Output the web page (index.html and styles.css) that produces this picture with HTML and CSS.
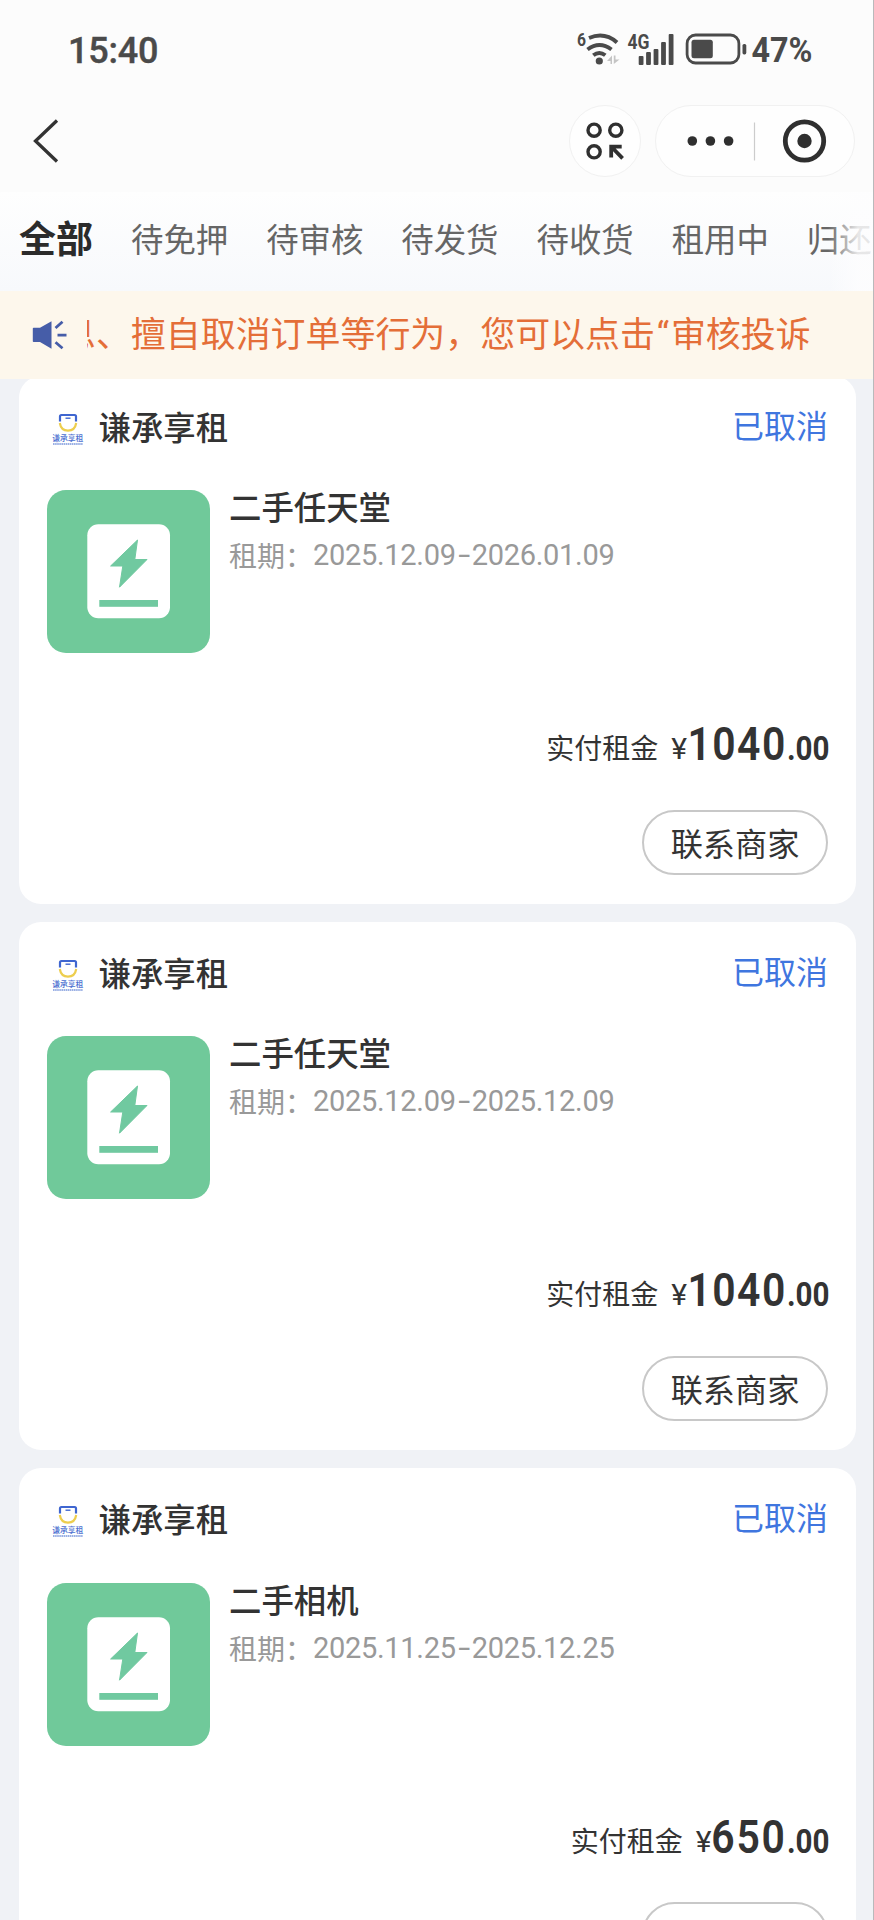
FILE: index.html
```html
<!DOCTYPE html>
<html lang="zh-CN">
<head>
<meta charset="utf-8">
<title>我的订单</title>
<link rel="stylesheet" href="styles.css">
</head>
<body>
<svg class="defs" width="0" height="0" aria-hidden="true">
  <symbol id="shop-logo" viewBox="0 0 32 34">
    <path d="M8 9.5V4.4Q8 3 9.4 3H22.6Q24 3 24 4.4V9.5" fill="none" stroke="#3f66d0" stroke-width="2.2"/>
    <path d="M13.5 6.2H18.5" fill="none" stroke="#3f66d0" stroke-width="1.4"/>
    <path d="M7.8 11Q9 18.6 16 18.6T24.2 11" fill="none" stroke="#edce4e" stroke-width="2.2"/>
    <text class="logo-text" x="0.3" y="29.4" textLength="31" lengthAdjust="spacingAndGlyphs">谦承享租</text>
    <path d="M1 32H31" stroke="#7b97dc" stroke-width="1.3" stroke-dasharray="1.6 .5"/>
  </symbol>
  <symbol id="thumb" viewBox="0 0 163 163">
    <rect width="163" height="163" fill="#70c99a"/>
    <rect x="40.3" y="34.3" width="82.7" height="94" rx="11" fill="#fff"/>
    <path d="M90.5 50L87.8 69.5H100L72.5 97.2L75.8 76H63.6Z" fill="#70c9a0" stroke="#70c9a0" stroke-width="1" stroke-linejoin="round"/>
    <rect x="52.3" y="110" width="58.7" height="6.8" fill="#70c9a0"/>
  </symbol>
</svg>

<div class="screen">
  <header class="top">
    <div class="status-bar">
      <span class="time">15:40</span>
      <svg class="status-icons" width="240" height="44" viewBox="573.5 28 240 44">
        <text class="st" x="576.5" y="46" font-size="17.5" textLength="9" lengthAdjust="spacingAndGlyphs">6</text>
        <g fill="none" stroke="#4a4a4a" stroke-width="4">
          <path d="M588.5 38Q604 31.5 616.5 42.5"/>
          <path d="M587 49.5Q599 40.5 611 49.5"/>
          <path d="M592.8 55.3Q598.8 50.6 604.8 55.3"/>
        </g>
        <circle cx="598.8" cy="61" r="3.6" fill="#4a4a4a"/>
        <path d="M606.5 61L611.5 55.5V64H610V61ZM613.3 55.5V64L619 59.5H615V55.5Z" fill="#c4c4c4"/>
        <text class="st" x="627" y="48.5" font-size="20" textLength="22" lengthAdjust="spacingAndGlyphs">4G</text>
        <g fill="#4a4a4a">
          <rect x="638.2" y="56" width="4.8" height="9" rx="1"/>
          <rect x="645.6" y="52" width="4.8" height="13" rx="1"/>
          <rect x="653.1" y="49" width="4.8" height="16" rx="1"/>
          <rect x="660.6" y="42" width="4.8" height="23" rx="1"/>
          <rect x="668.2" y="34" width="4.8" height="31" rx="1"/>
          <rect x="691" y="39.7" width="21.3" height="18.5" rx="2.5"/>
          <rect x="742" y="44" width="3.8" height="10.4" rx="1.6"/>
        </g>
        <rect x="686.6" y="35" width="51.8" height="28" rx="8.5" fill="none" stroke="#4a4a4a" stroke-width="2.8"/>
        <text class="st" x="751" y="62.2" font-size="35" textLength="61" lengthAdjust="spacingAndGlyphs">47%</text>
      </svg>
    </div>
    <nav class="nav-bar">
      <svg class="back" width="30" height="46" viewBox="0 0 30 46"><path d="M26 2.5L4.5 23L26 43.5" fill="none" stroke="#333" stroke-width="3.3"/></svg>
      <div class="nav-actions">
        <span class="round-btn">
          <svg width="40" height="40" viewBox="0 0 40 40" fill="none" stroke="#2f2f2f" stroke-width="3.4">
            <circle cx="9.1" cy="9.2" r="6.1"/><circle cx="30.8" cy="9.2" r="6.1"/><circle cx="9.1" cy="30.8" r="6.1"/>
            <path d="M36.7 25.6H26.2V36.4M26.6 26L37.6 37.4" stroke-width="3.8"/>
          </svg>
        </span>
        <span class="capsule">
          <svg width="198" height="70" viewBox="656 105.5 198 70">
            <g fill="#2f2f2f"><circle cx="692.3" cy="140.5" r="4.8"/><circle cx="710.4" cy="140.5" r="4.8"/><circle cx="728.6" cy="140.5" r="4.8"/><circle cx="804.5" cy="140.5" r="7.2"/></g>
            <path d="M754.5 122V160" stroke="#ccc" stroke-width="1.2"/>
            <circle cx="804.5" cy="140.5" r="19.2" fill="none" stroke="#2f2f2f" stroke-width="4.8"/>
          </svg>
        </span>
      </div>
    </nav>
  </header>

  <div class="tabs">
    <span class="tab active">全部</span><span class="tab">待免押</span><span class="tab">待审核</span><span class="tab">待发货</span><span class="tab">待收货</span><span class="tab">租用中</span><span class="tab">归还</span>
  </div>

  <div class="notice">
    <svg class="horn" width="36" height="30" viewBox="0 0 36 30">
      <path d="M.8 8.6Q.8 7.8 1.6 7.8H8L19.5 1.2V28.8L8 22H1.6Q.8 22 .8 21.2Z" fill="#465da8"/>
      <path d="M23.5 8L30.5 1.8M25.5 15.2H34.5M23.5 22.2L30.5 28.2" stroke="#465da8" stroke-width="2.8"/>
    </svg>
    <div class="notice-view"><div class="notice-text">息、擅自取消订单等行为，您可以点击<span class="quote">“</span>审核投诉</div></div>
  </div>

  <main class="orders">
    <article class="card">
      <div class="card-head"><svg class="logo" width="32" height="34"><use href="#shop-logo"/></svg><span class="shop">谦承享租</span><span class="state">已取消</span></div>
      <div class="goods"><svg class="thumb" width="163" height="163"><use href="#thumb"/></svg>
        <div class="info"><div class="title">二手任天堂</div><div class="period">租期：<span class="dates">2025.12.09<i class="dash">-</i>2026.01.09</span></div></div></div>
      <div class="pay"><span class="pay-label">实付租金</span><span class="yen">¥</span><span class="int digits-4">1040</span><span class="dec">.00</span></div>
      <div class="actions"><span class="btn">联系商家</span></div>
    </article>
    <article class="card">
      <div class="card-head"><svg class="logo" width="32" height="34"><use href="#shop-logo"/></svg><span class="shop">谦承享租</span><span class="state">已取消</span></div>
      <div class="goods"><svg class="thumb" width="163" height="163"><use href="#thumb"/></svg>
        <div class="info"><div class="title">二手任天堂</div><div class="period">租期：<span class="dates">2025.12.09<i class="dash">-</i>2025.12.09</span></div></div></div>
      <div class="pay"><span class="pay-label">实付租金</span><span class="yen">¥</span><span class="int digits-4">1040</span><span class="dec">.00</span></div>
      <div class="actions"><span class="btn">联系商家</span></div>
    </article>
    <article class="card">
      <div class="card-head"><svg class="logo" width="32" height="34"><use href="#shop-logo"/></svg><span class="shop">谦承享租</span><span class="state">已取消</span></div>
      <div class="goods"><svg class="thumb" width="163" height="163"><use href="#thumb"/></svg>
        <div class="info"><div class="title">二手相机</div><div class="period">租期：<span class="dates">2025.11.25<i class="dash">-</i>2025.12.25</span></div></div></div>
      <div class="pay"><span class="pay-label">实付租金</span><span class="yen">¥</span><span class="int digits-3">650</span><span class="dec">.00</span></div>
      <div class="actions"><span class="btn">联系商家</span></div>
    </article>
  </main>
</div>
</body>
</html>
```
FILE: styles.css
```css
* { box-sizing: border-box; }
html, body { height: 1920px; overflow: hidden; }
body { margin: 0; background: #f0f2f6; font-family: "Noto Sans CJK SC", sans-serif; color: #333; }
.defs { position: absolute; }
.screen { width: 874px; height: 1920px; overflow: hidden; position: relative; display: flex; flex-direction: column; }
.screen::after { content: ""; position: absolute; z-index: 2; right: 0; top: 0; width: 1px; height: 100%; background: #b9b9bb; }

.top { height: 192px; flex: none; background: #fcfcfc; }
.status-bar { height: 100px; display: flex; justify-content: space-between; align-items: center; padding: 0 60px 0 68px; }
.time { font: 500 36px/44px Roboto, sans-serif; color: #4a4a4a; letter-spacing: -.2px; padding-top: 1px; -webkit-text-stroke: .4px #4a4a4a; }
.status-icons { display: block; }
.st { font-family: Roboto, sans-serif; font-weight: 700; fill: #4a4a4a; }
.nav-bar { height: 84px; display: flex; justify-content: space-between; align-items: center; padding: 0 19px 2px 31px; }
.back { display: block; }
.nav-actions { display: flex; gap: 14px; }
.round-btn, .capsule { height: 72px; border: 1px solid #f1f1f1; border-radius: 36px; background: #fefefe; display: flex; align-items: center; justify-content: center; }
.round-btn { width: 72px; }
.capsule { width: 200px; }

.tabs { height: 99px; flex: none; position: relative; overflow: hidden; display: flex; align-items: center; gap: 38px; padding: 0 0 7px 19px; white-space: nowrap; background: linear-gradient(#fefefe, #f7f9fc); color: #666; font-size: 32.4px; line-height: 48px; }
.tabs::after { content: ""; position: absolute; right: 0; top: 0; width: 46px; height: 99px; background: linear-gradient(90deg, rgba(253,253,254,0), rgba(253,253,254,.85) 65%); }
.tab { flex: none; }
.active { font-size: 37px; font-weight: 700; color: #2b2b2b; margin-top: -3px; }

.notice { height: 88px; flex: none; position: relative; z-index: 1; display: flex; align-items: center; padding-left: 32px; background: #fdf7ec; }
.horn { flex: none; }
.notice-view { margin: -3px 0 0 19px; width: 725px; overflow: hidden; }
.notice-text { margin-left: -26px; white-space: nowrap; font-size: 34.95px; line-height: 52px; color: #e46e38; }
.quote { font-family: Roboto, sans-serif; display: inline-block; width: 16px; text-align: center; }

.orders { margin-top: -3.5px; padding: 0 18px 0 19px; display: flex; flex-direction: column; gap: 18px; }
.card { height: 528.3px; flex: none; background: #fff; border-radius: 22px; padding: 26px 28px 29px 28px; display: flex; flex-direction: column; }
.card-head { height: 48px; display: flex; align-items: center; padding-left: 5px; }
.logo { margin-top: 6px; }
.logo-text { font: 500 7.8px "Noto Sans CJK SC", sans-serif; fill: #4a6fd0; }
.shop { margin-left: 14.5px; font-size: 32.4px; font-weight: 500; line-height: 48px; }
.state { margin-left: auto; margin-top: -4px; font-size: 32px; line-height: 48px; color: #3f76df; }
.goods { margin-top: 40.5px; display: flex; gap: 19px; }
.thumb { flex: none; border-radius: 19px; }
.title { font-size: 32.4px; font-weight: 500; line-height: 32px; }
.period { margin-top: 13px; display: flex; font-size: 28px; line-height: 40px; color: #999; }
.dates { font-family: Roboto, sans-serif; font-size: 29px; letter-spacing: -.3px; }
.dash { font-style: normal; display: inline-block; width: 16px; text-align: center; transform: scaleX(1.5); }
.pay { margin-top: 63px; height: 56px; display: flex; align-items: baseline; justify-content: flex-end; line-height: 56px; }
.pay-label { font-size: 28px; margin-right: 13px; }
.yen { font: 400 30px Roboto, sans-serif; }
.int { font: 600 46.5px Roboto, sans-serif; transform: translateY(1px) scaleX(.88); transform-origin: right; }
.digits-4 { margin-left: -12.6px; letter-spacing: 1.6px; }
.digits-3 { margin-left: -10.2px; letter-spacing: 2px; }
.dec { font: 700 34px Roboto, sans-serif; width: 42px; margin-right: -1px; transform: translateY(1px) scaleX(.87); transform-origin: left; }
.actions { margin-top: auto; display: flex; justify-content: flex-end; }
.btn { width: 186px; height: 65px; border: 2px solid #c8c8c8; border-radius: 33px; padding-bottom: 1px; display: flex; align-items: center; justify-content: center; font-size: 32.2px; line-height: 48px; }
```
